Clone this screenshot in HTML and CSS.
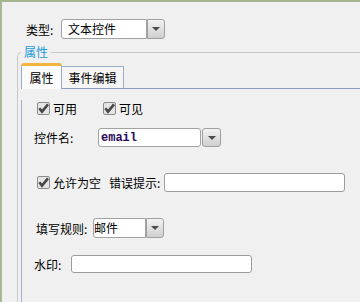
FILE: index.html
```html
<!DOCTYPE html>
<html lang="zh-CN">
<head>
    <meta charset="UTF-8">
    <title>控件属性</title>
    <link rel="stylesheet" href="styles.css">
</head>
<body>
    <div class="frame">
        <div class="type-row">
            <span class="type-label">类型:</span>
            <div class="combo">
                <div class="combo-field type-field">文本控件</div>
                <div class="combo-btn"><span class="arrow"></span></div>
            </div>
        </div>

        <fieldset class="group">
            <legend>属性</legend>
            <div class="tab-bar">
                <div class="tab active">属性</div>
                <div class="tab">事件编辑</div>
            </div>
            <div class="pane">
                <div class="row row-checks">
                    <label class="check">
                        <svg width="13" height="13" viewBox="0 0 13 13"><rect x="0.5" y="0.5" width="12" height="12" rx="1.5" fill="#e4e4e4" stroke="#8c8c8c"/><path d="M2.3 6.3 L5 9.6 L11 2.4" fill="none" stroke="#474747" stroke-width="2.6"/></svg>
                        <span>可用</span>
                    </label>
                    <label class="check second">
                        <svg width="13" height="13" viewBox="0 0 13 13"><rect x="0.5" y="0.5" width="12" height="12" rx="1.5" fill="#e4e4e4" stroke="#8c8c8c"/><path d="M2.3 6.3 L5 9.6 L11 2.4" fill="none" stroke="#474747" stroke-width="2.6"/></svg>
                        <span>可见</span>
                    </label>
                </div>

                <div class="row row-name">
                    <span class="name-label">控件名:</span>
                    <div class="combo">
                        <div class="combo-field name-field">email</div>
                        <div class="combo-btn name-btn"><span class="arrow"></span></div>
                    </div>
                </div>

                <div class="row row-empty">
                    <label class="check">
                        <svg width="13" height="13" viewBox="0 0 13 13"><rect x="0.5" y="0.5" width="12" height="12" rx="1.5" fill="#e4e4e4" stroke="#8c8c8c"/><path d="M2.3 6.3 L5 9.6 L11 2.4" fill="none" stroke="#474747" stroke-width="2.6"/></svg>
                        <span>允许为空</span>
                    </label>
                    <span class="error-label">错误提示:</span>
                    <div class="text-box error-box"></div>
                </div>

                <div class="row row-rule">
                    <span class="rule-label">填写规则:</span>
                    <div class="combo">
                        <div class="combo-field rule-field">邮件</div>
                        <div class="combo-btn"><span class="arrow"></span></div>
                    </div>
                </div>

                <div class="row row-mark">
                    <span class="mark-label">水印:</span>
                    <div class="text-box mark-box"></div>
                </div>
            </div>
        </fieldset>
    </div>
</body>
</html>
```

FILE: styles.css
```css
body {
    margin: 0;
    background: #f0f0f0;
    font-family: "Noto Sans CJK SC", "Noto Sans", sans-serif;
    font-size: 12px;
    color: #000;
}

.frame {
    width: 360px;
    height: 302px;
    box-sizing: border-box;
    border-top: 2px solid #a3b48f;
    border-left: 2px solid #a7b896;
    overflow: hidden;
}

/* 类型 */
.type-row {
    display: flex;
    align-items: center;
    margin-top: 17px;
    padding-left: 24px;
}

.type-label {
    width: 35px;
}

.combo {
    display: flex;
    height: 20px;
}

.combo-field {
    box-sizing: border-box;
    height: 100%;
    background: #fff;
    border: 1px solid #a2a2a2;
    border-radius: 3px 0 0 3px;
    display: flex;
    align-items: center;
    line-height: 1;
}

.type-field {
    width: 86px;
    padding-left: 6px;
}

.combo-btn {
    box-sizing: border-box;
    width: 18px;
    height: 100%;
    border: 1px solid #a0a0a0;
    border-radius: 0 3px 3px 0;
    background: linear-gradient(#f2f2f2, #cfcfcf);
    display: flex;
    align-items: center;
    justify-content: center;
}

.arrow {
    width: 0;
    height: 0;
    border-left: 4px solid transparent;
    border-right: 4px solid transparent;
    border-top: 4px solid #4c4c4c;
}

/* 属性 分组 */
.group {
    margin: 5px 0 0 15px;
    padding: 3px 0 0 3px;
    border: 1px solid #c9c9c9;
    border-right: none;
    border-bottom: none;
    border-radius: 5px 0 0 0;
    min-width: 0;
    height: 300px;
}

.group legend {
    padding: 0 3px;
    color: #1d9bd8;
    line-height: 16px;
}

.tab-bar {
    display: flex;
    align-items: flex-end;
    border-bottom: 1px solid #8b9ebd;
    height: 25px;
}

.tab {
    box-sizing: border-box;
    height: 22px;
    width: 62px;
    border: 1px solid #9cadc7;
    border-left: none;
    border-bottom: none;
    background: #f5f5f5;
    text-align: center;
    line-height: 21px;
}

.tab.active {
    width: 41px;
    height: 26px;
    margin-bottom: -1px;
    border-left: 1px solid #9cadc7;
    border-top: 3px solid #f3b53c;
    border-radius: 3px 3px 0 0;
    background: #fbfbfb;
    line-height: 24px;
}

.pane {
    border-left: 1px solid #a2b2ca;
    height: 240px;
}

.row {
    display: flex;
    align-items: center;
}

.check {
    display: flex;
    align-items: center;
    gap: 3px;
    margin-left: 15px;
}

.check svg {
    display: block;
}

.row-checks {
    margin-top: 11px;
    height: 16px;
}

.check.second {
    margin-left: 26px;
}

.row-name {
    margin-top: 12px;
}

.name-label {
    margin-left: 12px;
    width: 64px;
}

.name-field {
    width: 103px;
    height: 19px;
    padding-left: 2px;
    font-family: "Liberation Mono", "DejaVu Sans Mono", monospace;
    font-weight: bold;
    color: #2a0a5a;
    border-radius: 3px;
}

.name-btn {
    width: 19px;
    height: 19px;
    margin-left: 1px;
    border-radius: 3px;
}

.row-name .combo {
    height: 19px;
}

.row-empty {
    margin-top: 26px;
    height: 19px;
}

.error-label {
    margin-left: 8px;
    width: 55px;
}

.text-box {
    box-sizing: border-box;
    background: #fff;
    border: 1px solid #9c9c9c;
    border-radius: 3px;
}

.error-box {
    width: 181px;
    height: 19px;
}

.row-rule {
    margin-top: 26px;
}

.rule-label {
    margin-left: 14px;
    width: 57px;
}

.rule-field {
    width: 53px;
    padding-left: 0;
}

.row-mark {
    margin-top: 17px;
}

.mark-label {
    margin-left: 12px;
    width: 37px;
}

.mark-box {
    width: 181px;
    height: 18px;
}
```
